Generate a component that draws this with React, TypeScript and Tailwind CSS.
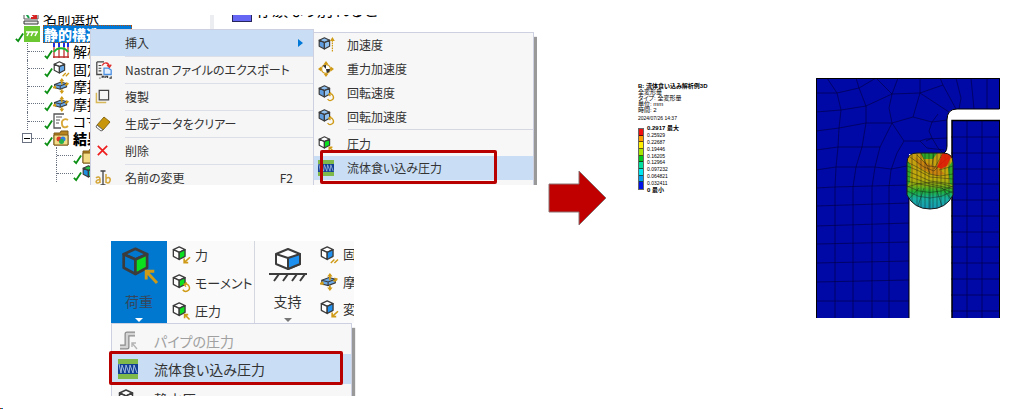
import type { ReactNode } from "react";
import clsx from "clsx";

type IconProps = { className?: string };

type CubeProps = IconProps & {
  front?: string;
  side?: string;
  top?: string;
  children?: ReactNode;
};

function Cube({ className = "size-4", front = "#fff", side = "#fff", top = "#fff", children }: CubeProps) {
  return (
    <svg viewBox="0 0 20 20" className={clsx("shrink-0 overflow-visible", className)} aria-hidden="true">
      <g stroke="#3c3c3c" strokeWidth="1.5" strokeLinejoin="round">
        <path d="M8 1 14.5 4 8 7 1.5 4Z" fill={top} />
        <path d="M1.5 4 8 7V15L1.5 11.5Z" fill={front} />
        <path d="M14.5 4 8 7V15L14.5 11.5Z" fill={side} />
      </g>
      {children}
    </svg>
  );
}

const gold = "#cf9a16";

function PullArrow() {
  return <path d="M20 12.5 14 18M13.5 14V18.5H18" fill="none" stroke={gold} strokeWidth="1.8" />;
}

function PushArrow() {
  return <path d="M19.5 19.5 14.5 14.5M14 18V14H18" fill="none" stroke={gold} strokeWidth="1.8" />;
}

function Slashes() {
  return <path d="M12 19 16 15M16 19 20 15" fill="none" stroke={gold} strokeWidth="1.6" />;
}

function SpinArrow() {
  return <path d="M12 17.5A4 4 0 1 0 14 11.5M16.5 9.5 13.5 11.5 15.5 14" fill="none" stroke={gold} strokeWidth="1.6" />;
}

function FrictionIcon({ className = "size-4" }: IconProps) {
  return (
    <svg viewBox="0 0 20 20" className={clsx("shrink-0", className)} aria-hidden="true">
      <path d="M2 8 10 5 17 7V11L9 14 2 12Z" fill="#6aa9e8" stroke="#3c3c3c" strokeWidth="1.3" />
      <path d="M2 8 9 10 17 7M9 10V14" fill="none" stroke="#3c3c3c" strokeWidth="1.3" />
      <path d="M11 2V8M11 14V18M0 12 4 11M15 9 19 7" stroke={gold} strokeWidth="2" />
      <path d="M8 4 11 0 14 4ZM8 16 11 20 14 16ZM16 5 20 6.500 17 10ZM3 9 0 12 4 14Z" fill={gold} />
    </svg>
  );
}

function GravityIcon() {
  return (
    <svg viewBox="0 0 20 20" className="size-4 shrink-0" aria-hidden="true">
      <path d="M10 0 13 4H7ZM10 20 7 16H13ZM0 10 4 7V13ZM20 10 16 13V7Z" fill={gold} />
      <circle cx="10" cy="10" r="5.500" fill="#fff" stroke={gold} strokeWidth="1.6" />
      <path d="M10 10 6 6A5 5 0 0 1 10 5ZM10 10H15A5 5 0 0 1 11 15Z" fill="#333" />
    </svg>
  );
}

function FluidIcon({ className }: IconProps) {
  return (
    <svg viewBox="0 0 20 20" className={clsx("shrink-0", className)} aria-hidden="true">
      <path d="M0 0H20V20H0Z" fill="#7fb94a" />
      <path d="M0 5H20V15H0Z" fill="#123f94" />
      <path d="M1 5 3 14 4 6 7 14 8 6 11 14 12 6 15 14 16 6 19 14" fill="none" stroke="#9fb9df" strokeWidth="1" />
    </svg>
  );
}

function NastranIcon() {
  return (
    <svg viewBox="0 0 20 20" className="size-[18px] shrink-0" aria-hidden="true">
      <path d="M2 1H10M2 1V15H8" fill="none" stroke="#444" strokeWidth="1.4" />
      <path d="M4 5H7M4 8H7M4 11H7" stroke="#444" strokeWidth="1.2" />
      <path d="M8 5C10 1 15 1 16 6M13.5 4.500 16 7 18 4" fill="none" stroke="#e03030" strokeWidth="1.6" />
      <path d="M10 8H15L18 10V15H10Z" fill="#e4f0ff" stroke="#4b8fe0" strokeWidth="1.4" />
      <path d="M5 19H6M8 19V17H10V19M12 19V17H14V19M16 19H18V17" fill="none" stroke="#333" strokeWidth="1.2" />
    </svg>
  );
}

function DuplicateIcon() {
  return (
    <svg viewBox="0 0 16 16" className="size-[15px] shrink-0" aria-hidden="true" fill="none">
      <path d="M1.500 4V14.500H12" stroke="#d8b95a" strokeWidth="1.600" />
      <path d="M4.500 1.500H14.500V11.500H4.500Z" stroke="#444" strokeWidth="1.300" />
    </svg>
  );
}

function EraserIcon() {
  return (
    <svg viewBox="0 0 16 16" className="size-4 shrink-0" aria-hidden="true" strokeLinejoin="round">
      <path d="M9 1 15 6 8 14 2 9Z" fill="#c8960c" stroke="#8a6a14" />
      <path d="M2 9 8 14 6 15 1 11Z" fill="#fff" stroke="#666" />
    </svg>
  );
}

function DeleteIcon() {
  return (
    <svg viewBox="0 0 16 16" className="size-[15px] shrink-0" aria-hidden="true">
      <path d="M3 3 13 13M13 3 3 13" stroke="#ee1c1c" strokeWidth="1.800" />
    </svg>
  );
}

function RenameIcon() {
  return (
    <svg viewBox="0 0 16 16" className="size-4 shrink-0 overflow-visible" aria-hidden="true" fill="none">
      <path d="M1 8C3 6 5 7 5 9V13M5 10C1 9 0 13 2.500 13 4 13 5 12 5 11M11 4V13M11 9C13 6 16 8 15 11 14 14 12 13 11 12" stroke="#d5a63a" strokeWidth="1.500" />
      <path d="M5.500 1H10.500M8 1V15M5.500 15H10.500" stroke="#444" strokeWidth="1.300" />
    </svg>
  );
}

function PipeIcon() {
  return (
    <svg viewBox="0 0 20 20" className="size-5 shrink-0" aria-hidden="true" fill="none">
      <path d="M17 3H9V16H2" stroke="#8c8c8c" strokeWidth="5" strokeLinejoin="round" />
      <path d="M17 3H9V16H2" stroke="#d4d4d4" strokeWidth="2.500" strokeLinejoin="round" />
      <path d="M19 18 14 12M14 16V12H18" stroke="#b5b5b5" strokeWidth="1.400" />
    </svg>
  );
}

function Check() {
  return (
    <svg viewBox="0 0 10 12" className="h-3 w-[9px] shrink-0 self-end" aria-hidden="true">
      <path d="M1 8 3.500 10.500 9 2" fill="none" stroke="#0a8f12" strokeWidth="2" />
    </svg>
  );
}

function SelectionIcon() {
  return (
    <svg viewBox="0 0 16 16" className="size-4 shrink-0" aria-hidden="true">
      <path d="M1 1V10H15V1" fill="#fff" stroke="#555" />
      <path d="M2 3 6 9" stroke="#18a048" strokeWidth="2" />
      <path d="M8 4 13 9M13 4V9H8" fill="none" stroke="#d62020" strokeWidth="2" />
      <path d="M1 12H15V15H1Z" fill="#e8e8e8" stroke="#333" />
    </svg>
  );
}

function StaticIcon() {
  return (
    <svg viewBox="0 0 16 16" className="size-4 shrink-0" aria-hidden="true">
      <path d="M0 0H16V16H0Z" fill="#6cc832" />
      <path d="M2 6H14M5 6 3 10M9 6 7 10M13 6 11 10" stroke="#fff" strokeWidth="1.500" />
    </svg>
  );
}

function AnalysisIcon() {
  return (
    <svg viewBox="0 0 16 16" className="size-4 shrink-0" aria-hidden="true" fill="none">
      <path d="M1 4V15M6 4V15M11 4V15M15 4V15M0 14H16" stroke="#c03030" strokeWidth="1.300" />
      <path d="M1 9C4 4 12 4 15 9" stroke="#18b82e" strokeWidth="2" />
      <path d="M1 0V4M6 0V4M11 0V4M15 0V4" stroke="#2030e0" strokeWidth="2" />
    </svg>
  );
}

function CommandIcon() {
  return (
    <svg viewBox="0 0 16 16" className="size-4 shrink-0" aria-hidden="true" fill="none">
      <path d="M11 1H1V15H8" stroke="#555" strokeWidth="1.300" />
      <path d="M3 4H9M3 7H7M3 10H6" stroke="#555" />
      <path d="M15 7C12 5 8 7 9 11 9 15 13 15 15 13" stroke="#d8a838" strokeWidth="1.800" />
    </svg>
  );
}

function FolderIcon({ results = true }: { results?: boolean }) {
  return (
    <svg viewBox="0 0 16 16" className="size-4 shrink-0" aria-hidden="true">
      <path d="M1 3H7L8 1H15V15H1Z" fill="#b88420" stroke="#7c5a18" />
      <path d="M1 5H15V15H1Z" fill="#f4dc86" stroke="#7c5a18" />
      {results && (
        <>
          <circle cx="6" cy="9" r="2.500" fill="#e03a2a" />
          <circle cx="10" cy="9" r="2.500" fill="#2f7fe0" />
          <circle cx="8.500" cy="11.500" r="2.500" fill="#25b04a" />
        </>
      )}
    </svg>
  );
}

const treeItems = [
  { label: "解析設定", icon: <AnalysisIcon /> },
  { label: "固定", icon: <Cube side="#6aa9e8"><Slashes /></Cube> },
  { label: "摩擦", icon: <FrictionIcon /> },
  { label: "摩擦", icon: <FrictionIcon /> },
  { label: "コマンド", icon: <CommandIcon /> },
];

function OutlineTree() {
  return (
    <div className="-mt-[7px] grid h-[174px] w-[117px] grid-rows-10 overflow-hidden text-sm leading-4 whitespace-nowrap text-black">
      <div className="flex items-center gap-1 pl-2">
        <SelectionIcon />
        <span>名前選択</span>
      </div>
      <div className="flex items-center">
        <Check />
        <StaticIcon />
        <span className="ml-[3px] w-[89px] shrink-0 border border-dotted border-amber-700 bg-[#0078d7] font-black text-white">静的構造</span>
      </div>
      {treeItems.map((item, i) => (
        <div key={i} className="ml-3 flex items-center border-l border-dotted border-gray-500">
          <span className="w-4 shrink-0 border-t border-dotted border-gray-500" />
          <Check />
          {item.icon}
          <span className="ml-1">{item.label}</span>
        </div>
      ))}
      <div className="flex items-center pl-[7px]">
        <span className="flex size-2.5 shrink-0 items-center border border-gray-500 px-px">
          <span className="h-px w-full bg-black" />
        </span>
        <span className="w-3 shrink-0 border-t border-dotted border-gray-500" />
        <Check />
        <FolderIcon />
        <span className="ml-1 font-black">結果</span>
      </div>
      <div className="ml-[41px] flex items-center border-l border-dotted border-gray-500">
        <span className="w-4 shrink-0 border-t border-dotted border-gray-500" />
        <Check />
        <FolderIcon results={false} />
      </div>
      <div className="ml-[41px] flex items-center border-l border-dotted border-gray-500">
        <span className="w-4 shrink-0 border-t border-dotted border-gray-500" />
        <Check />
        <Cube top="#25c04a" front="#1f8fe0" side="#20c8a0" />
      </div>
    </div>
  );
}

const menuItems = [
  { label: "Nastran ファイルのエクスポート", icon: <NastranIcon /> },
  { label: "複製", icon: <DuplicateIcon /> },
  { label: "生成データをクリアー", icon: <EraserIcon /> },
  { label: "削除", icon: <DeleteIcon /> },
  { label: "名前の変更", icon: <RenameIcon />, shortcut: "F2" },
];

function ContextMenu() {
  return (
    <div className="absolute top-3.5 left-[75px] w-[224px] border border-[#ccd0e0] bg-[#f6f6f6] text-xs text-[#333]">
      <button type="button" className="flex h-[26px] w-full items-center bg-[#c9def5] pr-2.5 pl-[34px]">
        挿入
        <svg viewBox="0 0 5 8" className="ml-auto h-2 w-[5px]" aria-hidden="true">
          <path d="M0 0 5 4 0 8Z" fill="#0078d7" />
        </svg>
      </button>
      {menuItems.map((item) => (
        <button key={item.label} type="button" className="flex h-[27px] w-full items-stretch whitespace-nowrap">
          <span className="flex w-[34px] shrink-0 items-center pl-1">{item.icon}</span>
          <span className="flex grow items-center border-t border-[#dcdfe8] pr-5">
            {item.label}
            {item.shortcut && <span className="ml-auto">{item.shortcut}</span>}
          </span>
        </button>
      ))}
    </div>
  );
}

const insertItems = [
  {
    label: "加速度",
    icon: (
      <Cube top="#8fc0f2" front="#5f9de0" side="#8fc0f2">
        <path d="M18 18V5" stroke={gold} strokeWidth="1.500" strokeDasharray="2 1" />
        <path d="M15 5 18 0 21 5Z" fill={gold} />
      </Cube>
    ),
  },
  { label: "重力加速度", icon: <GravityIcon /> },
  { label: "回転速度", icon: <Cube top="#8fc0f2" front="#5f9de0" side="#8fc0f2"><SpinArrow /></Cube> },
  { label: "回転加速度", icon: <Cube top="#8fc0f2" front="#5f9de0" side="#8fc0f2"><SpinArrow /></Cube> },
];

function InsertMenu() {
  return (
    <div className="absolute top-[17px] left-[298px] h-44 w-[221px] border border-[#ccd0e0] bg-[#f7f7f7] text-xs text-[#333] shadow-[3px_5px_1px_#999]">
      {insertItems.map((item) => (
        <button key={item.label} type="button" className="flex h-6 w-full items-center gap-[13px] pl-1">
          {item.icon}
          {item.label}
        </button>
      ))}
      <div className="ml-[34px] border-t border-[#d5d8e0]" />
      <button type="button" className="mt-0.5 flex h-6 w-full items-center gap-[13px] pl-1">
        <Cube side="#0be01e"><PushArrow /></Cube>
        圧力
      </button>
      <button type="button" className="flex h-6 w-full items-center gap-[13px] bg-[#c9def5] pl-1">
        <FluidIcon className="size-4" />
        流体食い込み圧力
      </button>
    </div>
  );
}

function OutlineCapture() {
  return (
    <section className="relative h-[170px] overflow-hidden">
      <OutlineTree />
      <div className="absolute top-0 left-[195px] h-3.5 w-1 bg-[#ecedf0]" />
      <div className="absolute -top-3 left-[217px] flex items-start gap-1 text-base leading-3 text-black">
        <span className="h-[19px] w-5 border border-[#26265c] bg-[#6666f4]" />
        <span>存頒なり別れると</span>
      </div>
      <ContextMenu />
      <InsertMenu />
      <div className="absolute top-[135px] left-[305px] h-[34px] w-[177px] rounded-xs border-3 border-[#b80000]" />
    </section>
  );
}

const loadTools = [
  { label: "力", icon: <Cube className="size-[18px]" side="#0be01e"><PullArrow /></Cube> },
  { label: "モーメント", icon: <Cube className="size-[18px]" side="#0be01e"><SpinArrow /></Cube> },
  { label: "圧力", icon: <Cube className="size-[18px]" side="#0be01e"><PushArrow /></Cube> },
];

const supportTools = [
  { label: "固定", icon: <Cube className="size-[18px]" side="#1e90f0"><Slashes /></Cube> },
  { label: "摩擦", icon: <FrictionIcon className="size-[18px]" /> },
  { label: "変位", icon: <Cube className="size-[18px]" side="#1e90f0"><PullArrow /></Cube> },
];

function ToolList({ items }: { items: { label: string; icon: ReactNode }[] }) {
  return (
    <div className="flex flex-col text-[13px]">
      {items.map((item) => (
        <button key={item.label} type="button" className="flex h-7 items-center gap-[5px] whitespace-nowrap">
          {item.icon}
          {item.label}
        </button>
      ))}
    </div>
  );
}

function Caret({ className }: IconProps) {
  return (
    <svg viewBox="0 0 8 4" className={clsx("h-1 w-2", className)} fill="currentColor" aria-hidden="true">
      <path d="M0 0H8L4 4Z" />
    </svg>
  );
}

function RibbonCapture() {
  return (
    <section className="relative mt-14 ml-[94px] h-[155px] w-[247px]">
      <div className="h-full overflow-hidden pl-0.5 text-sm text-[#333]">
        <div className="flex h-[82px] w-[243px] overflow-hidden bg-[#fafafa]">
          <button type="button" className="flex w-14 shrink-0 flex-col items-center bg-[#0078d0] pt-1.5 text-[#35475c]">
            <Cube className="size-9" side="#0be01e" top="#0078d0" front="#0078d0">
              <path d="M20 20 14.500 14M14 18V13.500H18.500" fill="none" stroke={gold} strokeWidth="1.600" />
            </Cube>
            <span className="mt-2 leading-5">荷重</span>
            <Caret className="mt-[7px] text-white" />
          </button>
          <div className="w-[87px] shrink-0 pl-[5px]">
            <ToolList items={loadTools} />
          </div>
          <button type="button" className="flex w-[66px] shrink-0 flex-col items-center border-l border-[#d4d7e0] pt-1.5">
            <svg viewBox="0 0 38 36" className="h-9 w-[38px]" aria-hidden="true" strokeLinejoin="round">
              <path d="M19 2 31 7V17L19 22 7 17V7Z" fill="#fff" stroke="#3c3c3c" strokeWidth="2" />
              <path d="M31 7 19 11V22L31 17Z" fill="#1e90f0" stroke="#3c3c3c" strokeWidth="2" />
              <path d="M7 7 19 11" stroke="#3c3c3c" strokeWidth="2" />
              <path d="M0 27H38M10 27 5 34M19 27 14 34M28 27 23 34M36 27 31 34" stroke="#3c3c3c" strokeWidth="2" />
            </svg>
            <span className="mt-2 leading-5">支持</span>
            <Caret className="mt-[7px] text-[#777]" />
          </button>
          <ToolList items={supportTools} />
        </div>
        <div className="w-[241px] border border-[#ccd0e0] bg-[#f7f7f7] shadow-[3px_5px_1px_#999]">
          <button type="button" disabled className="flex h-[30px] w-full items-center gap-4 pt-1 pl-1.5 text-[#a0a0a0]">
            <PipeIcon />
            パイプの圧力
          </button>
          <button type="button" className="flex h-[30px] w-full items-center gap-4 bg-[#c9def5] pl-1.5">
            <FluidIcon className="size-5" />
            流体食い込み圧力
          </button>
          <button type="button" className="flex h-[30px] w-full items-center gap-4 pl-1.5">
            <Cube className="size-5" />
            静水圧
          </button>
        </div>
      </div>
      <div className="absolute top-[110px] left-0 h-[34px] w-[234px] rounded-xs border-3 border-[#b80000]" />
    </section>
  );
}

const legendLabels = ["0.25929", "0.22687", "0.19446", "0.16205", "0.12964", "0.097232", "0.064821", "0.032411"];

const legendColors = [
  "bg-[#f01010]",
  "bg-[#ff9e00]",
  "bg-[#fff000]",
  "bg-[#a8e600]",
  "bg-[#00c81e]",
  "bg-[#00e0a0]",
  "bg-[#00e6f0]",
  "bg-[#00a0f0]",
  "bg-[#0010e6]",
];

function ResultLegend() {
  return (
    <div className="pt-[83px] font-['Liberation_Sans','Noto_Sans_CJK_JP',sans-serif] text-[6px] leading-[6px] whitespace-nowrap text-black">
      <p className="font-bold">B: 流体食い込み解析例3D</p>
      <p>全変形量</p>
      <p>タイプ: 全変形量</p>
      <p>単位: mm</p>
      <p>時間: 2</p>
      <p className="mt-0.5 text-[5px]">2024/07/26 14:37</p>
      <div className="mt-1 flex gap-[3px]">
        <div className="mt-[3px] grid h-[62px] w-1.5 grid-rows-9 divide-y divide-black/60 border border-black/60">
          {legendColors.map((color) => (
            <span key={color} className={color} />
          ))}
        </div>
        <div className="grid h-[68px] grid-rows-10 items-center text-[5px]">
          <span className="text-[6px] font-bold">0.2917 最大</span>
          {legendLabels.map((label) => (
            <span key={label}>{label}</span>
          ))}
          <span className="text-[6px] font-bold">0 最小</span>
        </div>
      </div>
    </div>
  );
}

function ResultMesh() {
  return (
    <svg viewBox="0 0 184 240" className="mt-[78px] mr-5 ml-auto h-60 w-[184px] shrink-0" role="img" aria-label="全変形量">
      <defs>
        <linearGradient id="deform" x1="0" y1="0" x2="0" y2="1">
          <stop offset="0" stopColor="#c99a12" />
          <stop offset="0.45" stopColor="#c0ac0c" />
          <stop offset="0.58" stopColor="#7fae14" />
          <stop offset="0.68" stopColor="#1fb038" />
          <stop offset="0.8" stopColor="#18b0a0" />
          <stop offset="1" stopColor="#1598b8" />
        </linearGradient>
        <clipPath id="seal">
          <path d="M91 85Q91 75 101 75H127Q137 75 137 85V117Q130 131 114 131T91 117Z" />
        </clipPath>
      </defs>
      <path d="M0 0H184V31H141Q131 31 131 42V68Q131 76 124 76H93V240H0Z" fill="#0008a6" />
      <path d="M136 42H184V240H136Z" fill="#0008a6" />
      <g fill="none" stroke="#00003c" strokeWidth="0.7" strokeOpacity="0.85">
        <path d="M11 0 21 15 25 32 23 50 22 69 20 89 19 109V240" />
        <path d="M40 0 43 10 50 28V45L46 69 40 89 37 109V240" />
        <path d="M76 45 64 69 59 89 56 109V240M82 0 76 16" />
        <path d="M76 45 88 63 81 75 75 92 73 109V240" />
        <path d="M60 0 76 16M104 0V15L97 39 76 45M76 16 73 30 76 45M124 0 127 7 104 15 76 16 50 28 25 32 0 34" />
        <path d="M0 15 21 15 43 10 60 0M0 53 23 50 50 45 76 45M0 72 22 69 46 69 64 69" />
        <path d="M127 7 140 31M140 0 145 20 143 31M155 0 158 31M171 0V31M104 15 133 34" />
        <path d="M97 39 116 44 131 42M116 44 113 53 116 60 110 63M116 44 122 36M88 63 104 63 111 70 128 72M104 63 110 61 131 60M116 60 122 70 127 75" />
        <path d="M0 92 20 89 40 89 59 89 75 91 91 88M0 110 19 109 93 107M0 128 93 125M0 148 93 145M0 166 93 164M0 185 93 183M0 204 93 202M0 223H93" />
        <path d="M151 42V240M166 42V240" />
        <path d="M135 59H184M135 75H184M135 91H184M135 106H184M135 122H184M135 138H184M135 154H184M135 169H184M135 185H184M135 201H184M135 217H184M135 233H184" />
      </g>
      <g fill="none" stroke="#000">
        <path d="M0.500 240V0.500H183.500V31H141Q131 31 131 42V68Q131 76 124 76" />
        <path d="M93 118V240M183.500 42V240" />
        <path d="M136 240V42.500H184" strokeWidth="1.500" />
      </g>
      <g clipPath="url(#seal)">
        <path d="M90 74H138V132H90Z" fill="url(#deform)" />
        <path d="M104 74H122L117 81H108Z" fill="#2fa52a" />
        <path d="M90 80 95 88 94 104 90 110ZM137 82 132 90 134 106 138 108Z" fill="#35a828" />
        <path d="M98 79 122 90 129 96 120 98 104 90Z" fill="#c8820e" />
        <g fill="none" stroke="#151515" strokeOpacity="0.7" strokeWidth="0.6">
          <path d="M96 75V125M101 75V129M105 75V131M109 75V131M113 75V131M117 75V131M121 75V131M125 75V129M129 75V127M133 75V121" />
          <path d="M91 84 101 89 113 96 124 98 137 96M91 88 103 93 114 99 137 101M91 93 103 98 114 103 137 106M91 98 103 102 114 106 137 111" />
          <path d="M91 103 103 106 125 110 137 115M91 109Q114 100 137 109M91 113Q114 127 137 113M91 108Q114 121 137 108M94 79 108 89 118 93 128 83M101 77 112 88 121 89 133 79" />
          <path d="M105 75 111 88 114 96M118 75 116 88M127 75 118 91M137 88 123 92M93 121 103 110M102 128 108 110M114 131V108M126 128 120 110M135 121 126 110" />
        </g>
        <path d="M127 74 136 77 131 88 125 91 121 89Z" fill="#e01a08" fillOpacity="0.9" />
      </g>
      <path d="M91 85Q91 75 101 75H127Q137 75 137 85V117Q130 131 114 131T91 117Z" fill="none" stroke="#181818" />
    </svg>
  );
}

export default function App() {
  return (
    <div className="flex min-h-screen flex-col justify-between overflow-hidden bg-white font-['Noto_Sans_CJK_JP',sans-serif] [font-feature-settings:'palt']">
      <main className="flex items-start">
        <div className="w-[537px] shrink-0 pt-[15px] pl-[15px]">
          <OutlineCapture />
          <RibbonCapture />
        </div>
        <svg viewBox="0 0 60 58" className="mt-[169px] ml-2.5 h-[58px] w-[60px] shrink-0" aria-hidden="true">
          <path d="M2 15H32V2L59 29 32 56V43H2Z" fill="#c00000" stroke="#8a7272" />
        </svg>
        <div className="flex grow pl-[31px]">
          <ResultLegend />
          <ResultMesh />
        </div>
      </main>
      <footer className="flex h-px">
        <span className="w-px bg-red-600" />
        <span className="w-px bg-green-600" />
        <span className="w-px bg-blue-700" />
      </footer>
    </div>
  );
}
